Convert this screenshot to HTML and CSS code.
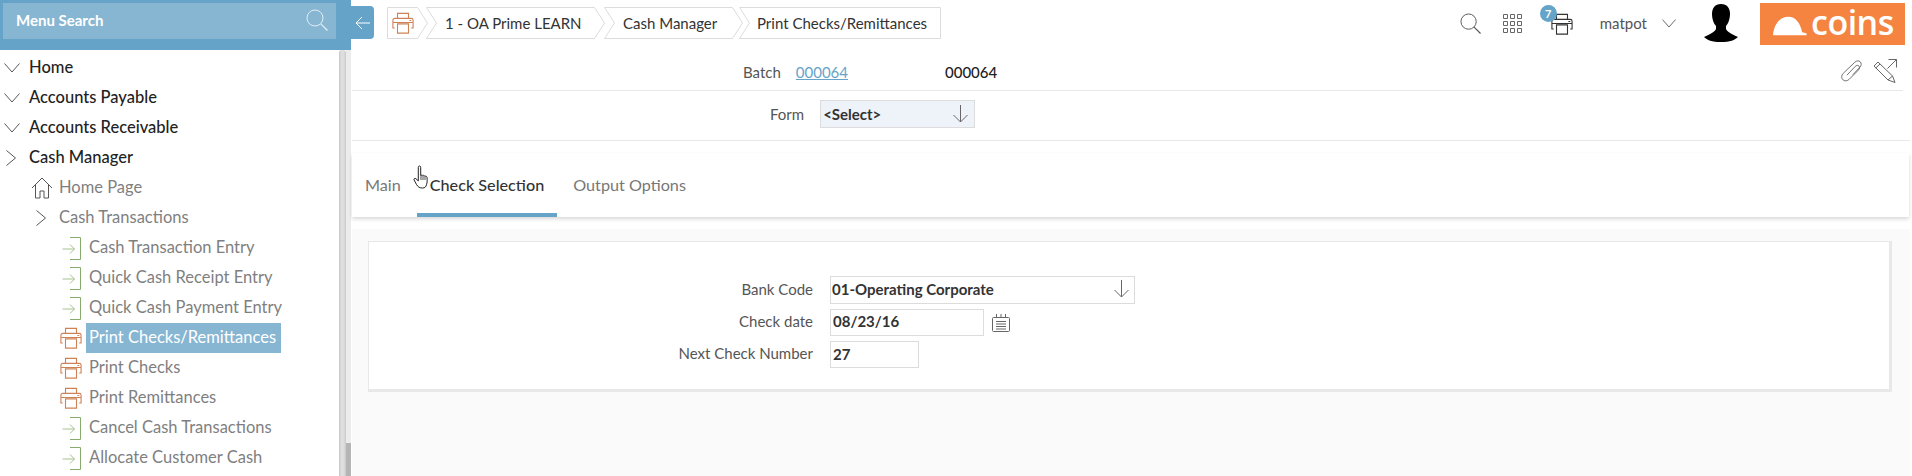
FILE: index.html
```html
<!DOCTYPE html>
<html lang="en">
<head>
<meta charset="utf-8">
<title>Print Checks/Remittances</title>
<link rel="stylesheet" href="styles.css">
</head>
<body>
<svg class="defs" width="0" height="0" aria-hidden="true">
  <defs>
    <symbol id="printer" viewBox="0 0 24 24">
      <path d="M6 7V1.500h12V7M3 17.500H1V9a2 2 0 0 1 2-2h18a2 2 0 0 1 2 2v8.500h-2M1 11.500h22M19 9.300h2M6 13h12v10H6z" fill="none" stroke="currentColor" stroke-width="1.200"/>
    </symbol>
    <symbol id="enter" viewBox="0 0 19 23">
      <path d="M.5 12h12M8 7.500l4.500 4.500L8 16.500" fill="none" stroke="#a6c28f" stroke-width="1"/>
      <path d="M8 .5h10.500v22H8" fill="none" stroke="#87ab6c" stroke-width="1"/>
    </symbol>
    <symbol id="down" viewBox="0 0 15 18">
      <path d="M7.500 0v17M.5 10l7 7 7-7" fill="none" stroke="currentColor" stroke-width="1"/>
    </symbol>
    <symbol id="chev-down" viewBox="0 0 16 10">
      <path d="M.5.500 8 9 15.500.5" fill="none" stroke="currentColor" stroke-width="1"/>
    </symbol>
    <symbol id="chev-right" viewBox="0 0 10 16">
      <path d="M.5.500 9.500 8 .5 15.500" fill="none" stroke="currentColor" stroke-width="1"/>
    </symbol>
    <symbol id="search" viewBox="0 0 22 22">
      <circle cx="9" cy="9" r="8" fill="none" stroke="currentColor" stroke-width="1"/>
      <path d="m14.800 14.800 6.700 6.700" fill="none" stroke="currentColor" stroke-width="1.200"/>
    </symbol>
  </defs>
</svg>

<div class="app">
  <aside class="sidebar">
    <div class="search-head">
      <div class="search-box">
        <span class="search-label">Menu Search</span>
        <svg class="search-icon"><use href="#search"/></svg>
      </div>
    </div>
    <div class="menu-wrap">
      <nav class="menu">
        <div class="row top"><svg class="chev-d"><use href="#chev-down"/></svg><span class="row-text">Home</span></div>
        <div class="row top"><svg class="chev-d"><use href="#chev-down"/></svg><span class="row-text">Accounts Payable</span></div>
        <div class="row top"><svg class="chev-d"><use href="#chev-down"/></svg><span class="row-text">Accounts Receivable</span></div>
        <div class="row top"><svg class="chev-r"><use href="#chev-right"/></svg><span class="row-text">Cash Manager</span></div>
        <div class="row sub">
          <svg class="home-icon" viewBox="0 0 22 22"><path d="M1 11 11 1l10 10M4.500 8v13h4.500v-7h4v7h4.500V8" fill="none" stroke="currentColor" stroke-width="1"/></svg>
          <span class="row-text">Home Page</span>
        </div>
        <div class="row sub folder"><svg class="chev-r"><use href="#chev-right"/></svg><span class="row-text">Cash Transactions</span></div>
        <div class="row leaf"><svg class="leaf-icon"><use href="#enter"/></svg><span class="row-text leaf-text">Cash Transaction Entry</span></div>
        <div class="row leaf"><svg class="leaf-icon"><use href="#enter"/></svg><span class="row-text leaf-text">Quick Cash Receipt Entry</span></div>
        <div class="row leaf"><svg class="leaf-icon"><use href="#enter"/></svg><span class="row-text leaf-text">Quick Cash Payment Entry</span></div>
        <div class="row leaf"><svg class="print-icon"><use href="#printer"/></svg><span class="row-text leaf-text selected">Print Checks/Remittances</span></div>
        <div class="row leaf"><svg class="print-icon"><use href="#printer"/></svg><span class="row-text leaf-text">Print Checks</span></div>
        <div class="row leaf"><svg class="print-icon"><use href="#printer"/></svg><span class="row-text leaf-text">Print Remittances</span></div>
        <div class="row leaf"><svg class="leaf-icon"><use href="#enter"/></svg><span class="row-text leaf-text">Cancel Cash Transactions</span></div>
        <div class="row leaf"><svg class="leaf-icon"><use href="#enter"/></svg><span class="row-text leaf-text">Allocate Customer Cash</span></div>
      </nav>
      <div class="scrollbar"><div class="scroll-track"></div><div class="scroll-rail"><div class="scroll-thumb"></div></div></div>
    </div>
  </aside>

  <main class="content">
    <header class="topbar">
      <div class="toggle">
        <svg class="toggle-arrow" viewBox="0 0 16 14"><path d="M15 7H1M7 1 1 7l6 6" fill="none" stroke="currentColor" stroke-width="1"/></svg>
      </div>
      <div class="crumbs">
        <div class="crumb crumb-home">
          <svg class="crumb-shape" width="41" height="32"><path d="M.5.500h30l10 15.500-10 15.500H.5z"/></svg>
          <svg class="crumb-print"><use href="#printer"/></svg>
        </div>
        <div class="crumb crumb-a">
          <svg class="crumb-shape" width="180" height="32"><path d="M.5.500h168l10 15.500-10 15.500H.5l10-15.500z"/></svg>
          <span class="crumb-text">1 - OA Prime LEARN</span>
        </div>
        <div class="crumb crumb-b">
          <svg class="crumb-shape" width="140" height="32"><path d="M.5.500h128l10 15.500-10 15.500H.5l10-15.500z"/></svg>
          <span class="crumb-text">Cash Manager</span>
        </div>
        <div class="crumb crumb-c">
          <svg class="crumb-shape" width="202" height="32"><path d="M.5.500h201v31H.5l10-15.500z"/></svg>
          <span class="crumb-text">Print Checks/Remittances</span>
        </div>
      </div>
      <div class="tools">
        <svg class="tool-search"><use href="#search"/></svg>
        <svg class="tool-grid" viewBox="0 0 19 19">
          <path d="M.5.500h4v4h-4zM7.500.500h4v4h-4zM14.500.500h4v4h-4zM.5 7.500h4v4h-4zM7.500 7.500h4v4h-4zM14.500 7.500h4v4h-4zM.5 14.500h4v4h-4zM7.500 14.500h4v4h-4zM14.500 14.500h4v4h-4z" fill="none" stroke="currentColor" stroke-width="1"/>
        </svg>
        <div class="tool-print">
          <svg class="tool-print-icon"><use href="#printer"/></svg>
          <span class="badge">7</span>
        </div>
        <span class="user">matpot</span>
        <svg class="user-chev"><use href="#chev-down"/></svg>
        <svg class="avatar" viewBox="0 0 34 38">
          <path d="M17 0c6 0 9 4 9 10 0 5-2 10-4 12v3c1 3 6 5 12 8-3 3-8 5-17 5S3 36 0 33c6-3 11-5 12-8v-3c-2-2-4-7-4-12C8 4 11 0 17 0z" fill="#000"/>
        </svg>
        <div class="logo">
          <svg class="logo-hat" viewBox="0 0 36 20"><path d="M1 19.500C2 8 8 .5 17 .5c7 0 12 6 14 16l4.500 1v2z" fill="#fff"/></svg>
          <span class="logo-text">coins</span>
        </div>
      </div>
    </header>

    <section class="batch-row">
      <div class="batch-fields">
        <span class="label">Batch</span>
        <a class="batch-link" href="#">000064</a>
        <span class="batch-value">000064</span>
      </div>
      <div class="batch-tools">
        <svg class="clip" viewBox="0 0 24 24"><path d="M6.500 16.500 15.500 7c1.500-1.500 3-1.500 4-.5s1 3-.5 4.500L9 21c-2 2-5 2.500-7 .5s-1.500-5 .5-7L15 2.500c2-2 4.500-2 6-.5s1.500 4-.5 6L13 16" fill="none" stroke="currentColor" stroke-width="1"/></svg>
        <svg class="expand" viewBox="0 0 24 24">
          <path d="M15.500.5h8v8M23.500.5l-9 9" fill="none" stroke="currentColor" stroke-width="1"/>
          <path d="M5 3 1 7l14 14 7 2.500L19.500 17zM2.800 9 7 5M15 21l4.500-4" fill="none" stroke="currentColor" stroke-width="1"/>
        </svg>
      </div>
    </section>

    <section class="form-row">
      <span class="label form-label">Form</span>
      <div class="form-select">
        <span>&lt;Select&gt;</span>
        <svg class="down"><use href="#down"/></svg>
      </div>
    </section>

    <div class="tabs-wrap">
      <section class="tabs">
        <span class="tab">Main</span>
        <span class="tab active">Check Selection</span>
        <span class="tab">Output Options</span>
        <svg class="cursor" viewBox="0 0 17 24">
          <path d="M5 1.500c1-1 2.200-.5 2.200.8v8c.8-.6 2 .2 2 .2.800-.5 1.800 0 2 .7.800-.4 2 0 2.300 1 .3 3 .3 5-.5 7.500-.5 2-1.500 3.300-4 3.300-3 0-4.500-1-6-3.500L.6 15c-.6-1 .7-2.200 1.700-1.400l2.500 2.300V2.300z" fill="#fff" stroke="#222" stroke-width="1"/>
          <path d="M7.500 10v5M9.500 11v4M11.500 11.500V15" fill="none" stroke="#222" stroke-width=".8"/>
        </svg>
      </section>
    </div>

    <section class="body-area">
      <div class="panel">
        <div class="panel-form">
          <label class="label">Bank Code</label>
          <div class="field bank"><span>01-Operating Corporate</span><svg class="down"><use href="#down"/></svg></div>
          <label class="label">Check date</label>
          <div class="date-cell">
            <div class="field date"><span>08/23/16</span></div>
            <svg class="calendar" viewBox="0 0 18 18">
              <path d="M1.500 3.500h15a1 1 0 0 1 1 1v12a1 1 0 0 1-1 1h-15a1 1 0 0 1-1-1v-12a1 1 0 0 1 1-1z" fill="none" stroke="#666" stroke-width="1"/>
              <path d="M4.500 0v3.500M9 0v3.500M13.500 0v3.500M4 7.500h10M4 10h10M4 12.500h10M4 15h10" fill="none" stroke="#666" stroke-width="1"/>
            </svg>
          </div>
          <label class="label">Next Check Number</label>
          <div class="field number"><span>27</span></div>
        </div>
      </div>
    </section>
  </main>
</div>
</body>
</html>
```
FILE: styles.css
```css
* { box-sizing: border-box; }
html, body { margin: 0; height: 100%; }
body {
  font-family: "Lato", "Liberation Sans", sans-serif;
  background: #fff;
  overflow: hidden;
}
svg { display: block; flex: none; }
.defs { position: absolute; }

.app { display: flex; height: 476px; }

/* Sidebar */
.sidebar { width: 351px; flex: none; display: flex; flex-direction: column; background: #fff; }
.search-head { height: 50px; background: #66a3c8; padding: 3px 15px 0 3px; }
.search-box {
  height: 36px; background: #87b6d3; display: flex; align-items: center;
  justify-content: space-between; padding: 0 8px 0 13px; color: #fff;
}
.search-label { font-size: 15px; font-weight: 700; color: #fff; margin-top: -2px; }
.search-icon { width: 22px; height: 22px; color: #e3eef5; margin-top: -2px; }
.menu-wrap { flex: 1; display: flex; min-height: 0; }
.menu { flex: 1; padding-top: 3px; min-width: 0; }
.row { height: 30px; display: flex; align-items: center; white-space: nowrap; font-size: 16.5px; }
.row-text { display: block; height: 30px; line-height: 28px; }
.top { font-weight: 500; color: #222; }
.chev-d { width: 16px; height: 10px; margin: 0 9px 0 4px; color: #555; }
.chev-r { width: 10px; height: 16px; margin: 0 13px 0 6px; color: #555; }
.sub { color: #7f7f7f; padding-left: 31px; }
.home-icon { width: 22px; height: 22px; margin-right: 6px; color: #555; }
.folder { padding-left: 30px; }
.leaf { padding-left: 60px; color: #7f7f7f; }
.leaf-icon { width: 19px; height: 23px; margin: 0 8px 0 2px; }
.print-icon { width: 22px; height: 22px; margin-right: 7px; color: #cf8156; }
.leaf-text { padding: 0 5px 0 3px; margin-left: -3px; }
.selected { background: #87b6d3; color: #fff; }
.scrollbar { width: 12px; flex: none; display: flex; }
.scroll-track {
  width: 7px; border-radius: 3px 3px 0 0;
  background: linear-gradient(to right, #c4c4c4, #dedede 30%, #dedede 70%, #c8c8c8);
}
.scroll-rail { flex: 1; background: #ececec; display: flex; flex-direction: column; justify-content: flex-end; }
.scroll-thumb { height: 33px; background: #b5b5b5; }

/* Main */
.content { flex: 1; min-width: 0; display: flex; flex-direction: column; background: #fff; }
.topbar { height: 50px; flex: none; background: #fff; display: flex; align-items: flex-start; }
.toggle {
  width: 23px; height: 33px; margin-top: 6px; background: #66a3c8; border-radius: 0 4px 4px 0;
  display: flex; align-items: center; justify-content: center; color: #fff;
}
.toggle-arrow { width: 16px; height: 14px; }
.crumbs { display: flex; margin: 7px 0 0 13px; font-size: 15px; color: #333; }
.crumb { display: grid; align-items: center; height: 32px; }
.crumb > * { grid-area: 1 / 1; }
.crumb-shape { fill: #fff; stroke: #dcdcdc; stroke-width: 1; }
.crumb-print { width: 22px; height: 22px; margin-left: 5px; color: #cf8156; }
.crumb-a { margin-left: -2px; }
.crumb-b { margin-left: -2px; }
.crumb-c { margin-left: -5px; }
.crumb-text { padding-left: 19px; z-index: 1; }
.crumb-c .crumb-text { padding-left: 18px; }
.tools { margin-left: auto; display: flex; align-items: center; height: 46px; color: #555; }
.tool-search { width: 21px; height: 21px; margin-right: 22px; color: #555; }
.tool-grid { width: 19px; height: 19px; margin-right: 29px; color: #666; }
.tool-print { position: relative; width: 22px; height: 22px; margin-right: 27px; margin-top: 2px; }
.tool-print-icon { width: 22px; height: 22px; color: #333; }
.badge {
  position: absolute; left: -11px; top: -8px; width: 17px; height: 17px; border-radius: 50%;
  background: #66a3c8; color: #fff; font-size: 11px; font-weight: 700; text-align: center; line-height: 17px;
}
.user { font-size: 15px; color: #555; margin-right: 15px; }
.user-chev { width: 14px; height: 9px; margin-right: 28px; color: #555; }
.avatar { width: 34px; height: 38px; margin-right: 22px; }
.logo {
  width: 145px; height: 42px; margin: 2px 7px 0 0; background: #f48440;
  display: flex; align-items: center; padding-left: 12px; color: #fff;
}
.logo-hat { width: 35px; height: 20px; margin-right: 4px; margin-top: 3px; }
.logo-text { font-family: "Open Sans", sans-serif; font-size: 34px; font-weight: 600; line-height: 38px; letter-spacing: -.5px; color: #fff; margin-top: -5px; }

.batch-row {
  height: 41px; flex: none; background: #fff; border-bottom: 1px solid #e8e8e8; margin: 0 9px 0 1px;
  display: flex; align-items: center; justify-content: space-between; padding-right: 6px;
}
.batch-fields { display: flex; align-items: center; margin-left: 391px; font-size: 15px; margin-top: 4px; }
.label { font-size: 15px; color: #555; }
.batch-link { color: #66a3c8; text-decoration: underline; margin-left: 15px; }
.batch-value { color: #222; font-weight: 500; margin-left: 97px; }
.batch-tools { display: flex; align-items: center; gap: 10px; color: #666; margin-top: 2px; }
.clip { width: 22px; height: 22px; }
.expand { width: 24px; height: 24px; }

.form-row {
  height: 50px; flex: none; background: #fff; border-bottom: 1px solid #e8e8e8; margin: 0 2px 0 1px;
  display: flex; align-items: center; padding: 0 0 3px 418px;
}
.form-label { margin-right: 16px; }
.form-select {
  width: 155px; height: 28px; background: #eef2f9; border: 1px solid #dcdcdc; padding: 0 6px 0 2px;
  display: flex; align-items: center; justify-content: space-between;
  font-size: 15px; font-weight: 700; color: #333;
}
.down { width: 15px; height: 18px; color: #666; }

.tabs-wrap { flex: none; background: #fff; margin: 0 2px 0 1px; padding: 12px 1px 12px 0; }
.tabs {
  position: relative; height: 64px; background: #fff;
  box-shadow: 0 2px 4px rgba(0,0,0,.16); display: flex; padding-left: 13px; font-size: 16.2px; color: #777;
}
.tab { line-height: 63px; height: 64px; margin-right: 16px; }
.tab.active { color: #333; font-weight: 500; border-bottom: 4px solid #66a3c8; padding: 0 13px; }
.cursor { position: absolute; left: 61px; top: 12px; width: 18px; height: 24px; }

.body-area { flex: 1; background: #fafafa; margin: 0 2px 0 1px; padding: 12px 18px 0 16px; min-height: 0; }
.panel { height: 151px; background: #fff; border: 1px solid #e8e8e8; border-width: 1px 3px 3px 1px; }
.panel-form {
  display: grid; grid-template-columns: 444px 1fr; column-gap: 17px; align-items: center;
  grid-template-rows: 28px 28px 28px; row-gap: 4px; padding-top: 34px;
}
.panel-form .label { text-align: right; padding-bottom: 2px; }
.field {
  height: 28px; background: #fff; border: 1px solid #dcdcdc; display: flex; align-items: center;
  justify-content: space-between; font-size: 15px; font-weight: 700; color: #333; padding: 0 5px 2px 1px;
}
.bank { width: 305px; }
.date { width: 154px; height: 27px; padding-left: 2px; }
.number { width: 89px; height: 27px; padding-left: 2px; align-self: end; }
.date-cell { display: flex; align-items: flex-start; gap: 8px; }
.calendar { width: 18px; height: 18px; margin-top: 5px; }
```
